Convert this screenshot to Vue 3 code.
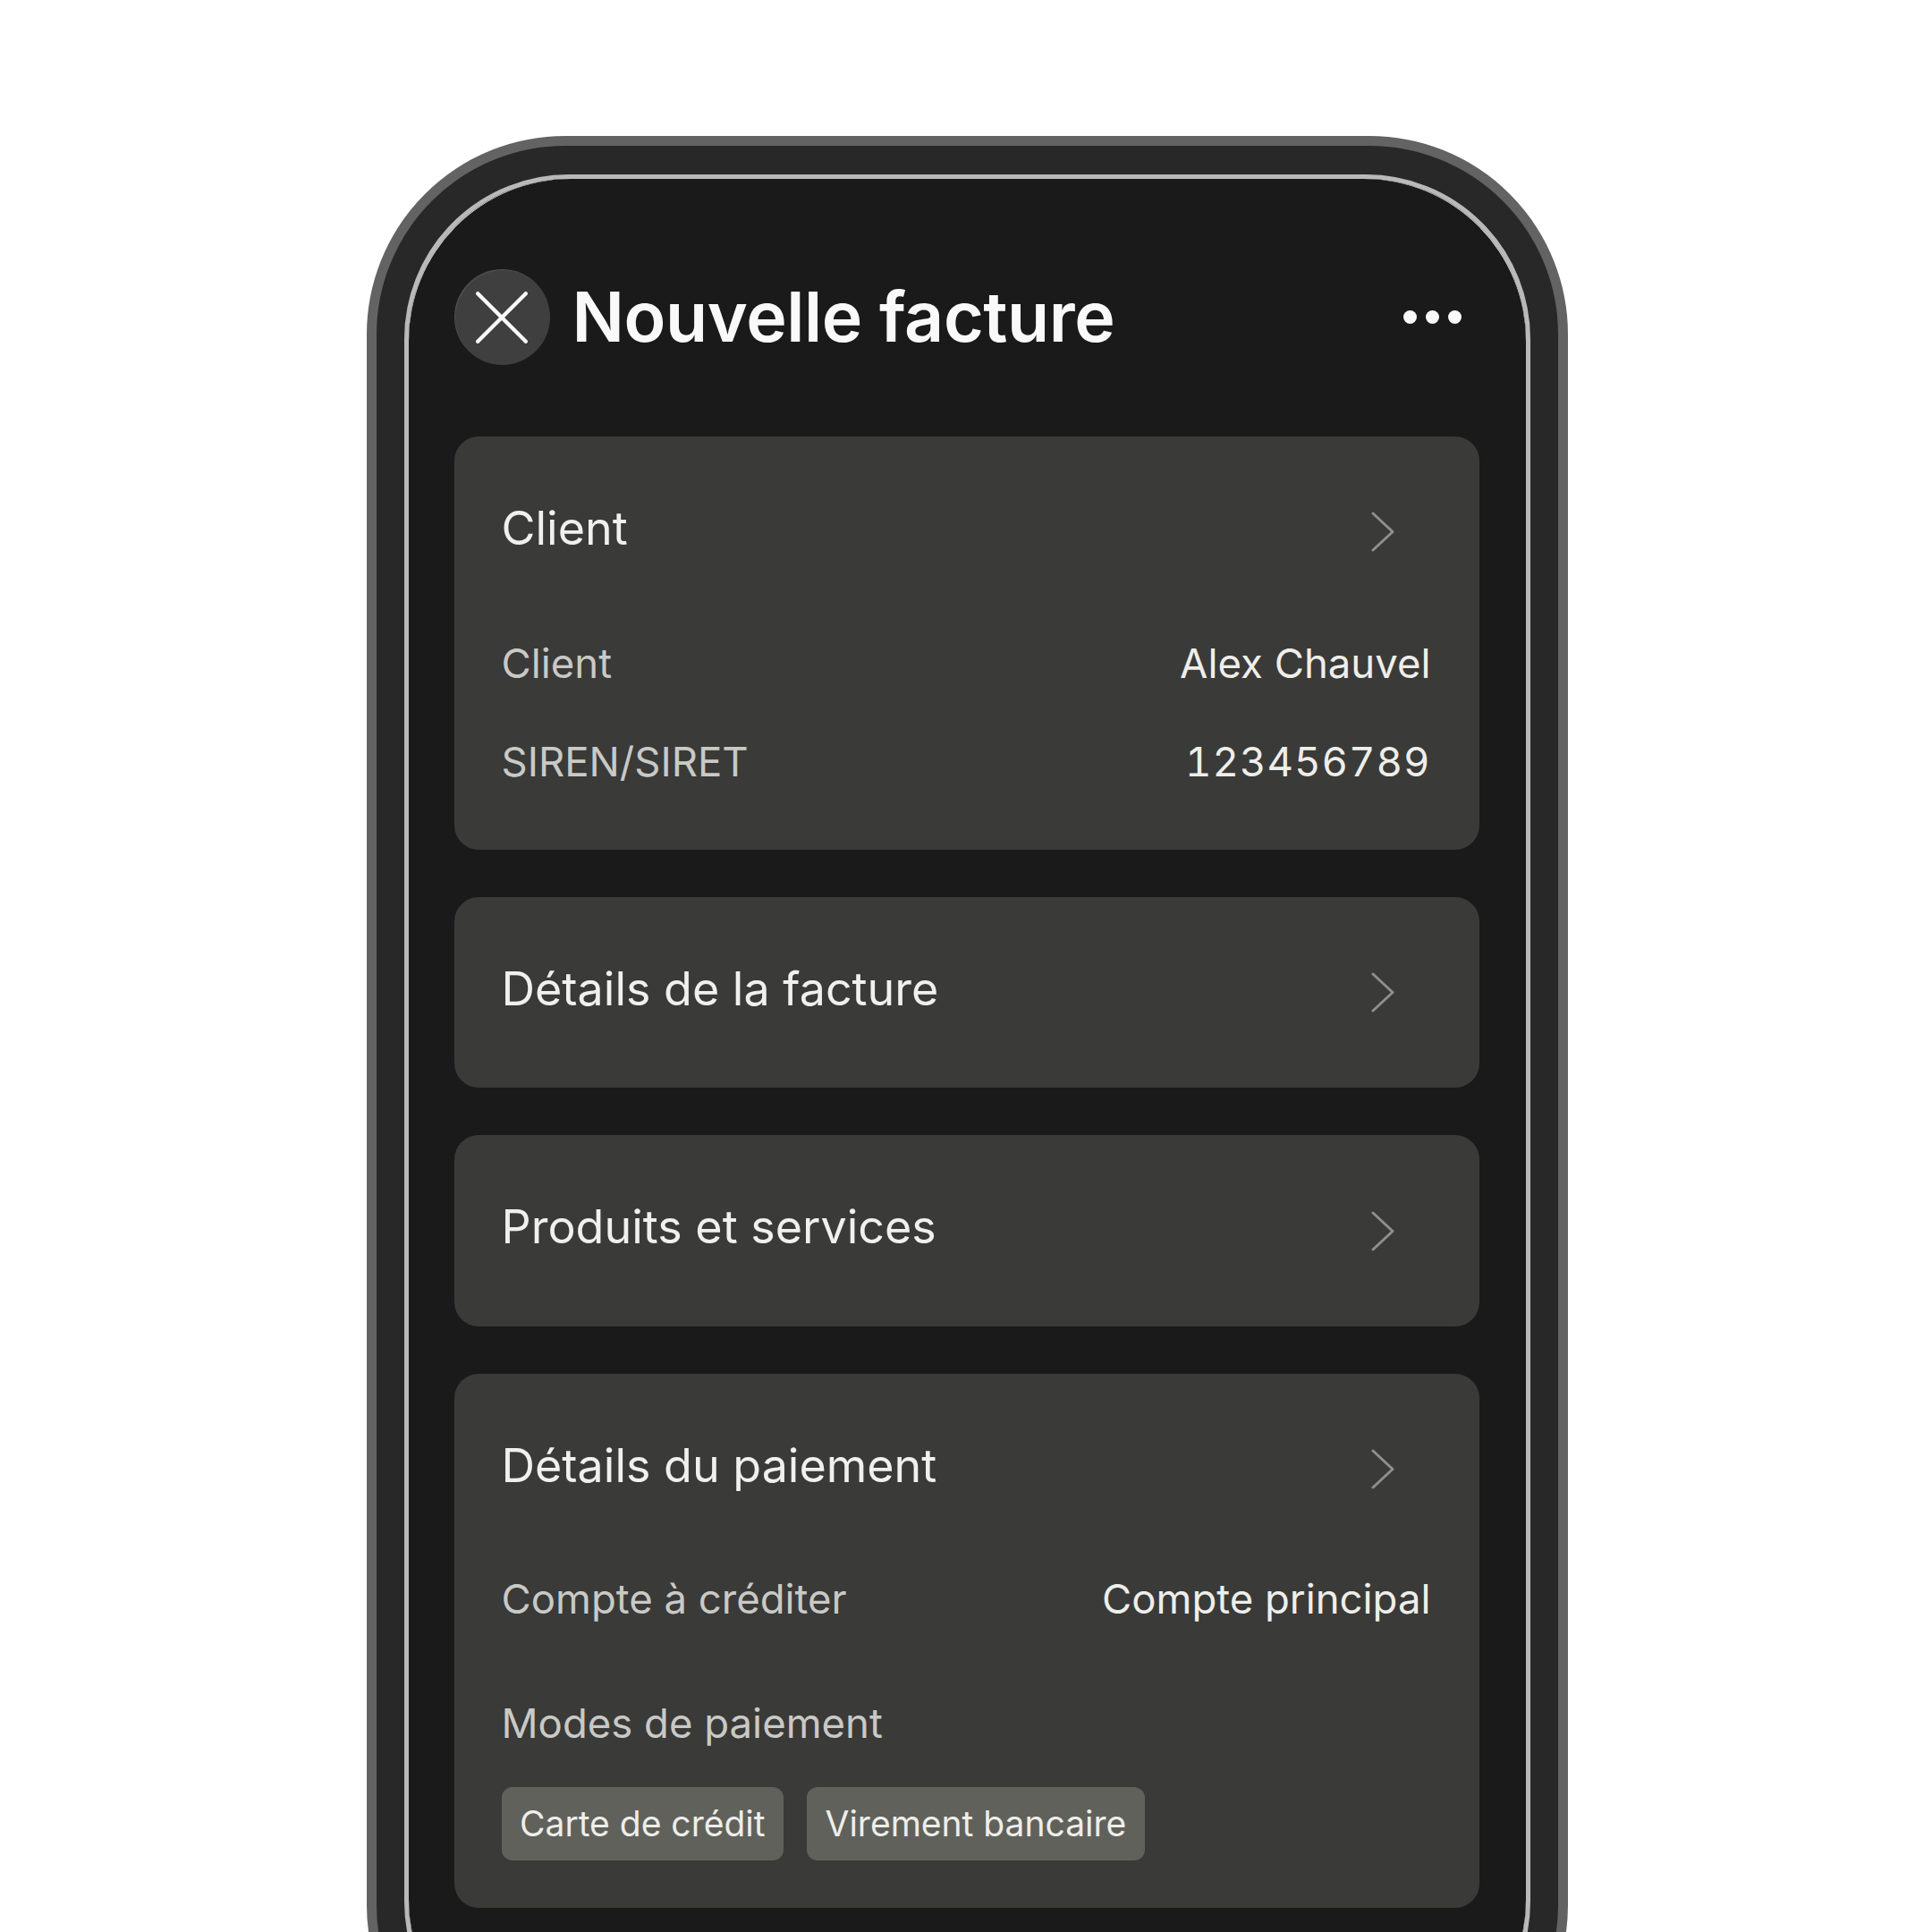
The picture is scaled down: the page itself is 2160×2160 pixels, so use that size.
<script setup>
const clientRows = [
  { label: 'Client', value: 'Alex Chauvel', num: false },
  { label: 'SIREN/SIRET', value: '123456789', num: true },
]
</script>

<template>
  <div class="page">
    <div class="phone">
      <div class="bezel">
        <div class="screen">
          <header class="top">
            <button class="close" aria-label="Fermer">
              <svg width="58" height="58" viewBox="0 0 58 58" fill="none">
                <path d="M2.2 2.2 L55.8 55.8 M55.8 2.2 L2.2 55.8" stroke="#f9f9f9" stroke-width="4.3" stroke-linecap="round" />
              </svg>
            </button>
            <h1 class="title">Nouvelle facture</h1>
            <div class="dots"><i></i><i></i><i></i></div>
          </header>

          <section class="card">
            <div class="head">
              <h2>Client</h2>
              <svg class="chev" width="26" height="45" viewBox="0 0 26 45" fill="none">
                <path d="M2 2 L24 22.5 L2 43" stroke="#8f8f8c" stroke-width="3" stroke-linecap="round" stroke-linejoin="round" />
              </svg>
            </div>
            <div class="body">
              <div v-for="r in clientRows" :key="r.label" class="row">
                <span class="lab">{{ r.label }}</span>
                <span class="val" :class="{ num: r.num }">{{ r.value }}</span>
              </div>
            </div>
          </section>

          <section class="card plain">
            <div class="head">
              <h2>Détails de la facture</h2>
              <svg class="chev" width="26" height="45" viewBox="0 0 26 45" fill="none">
                <path d="M2 2 L24 22.5 L2 43" stroke="#8f8f8c" stroke-width="3" stroke-linecap="round" stroke-linejoin="round" />
              </svg>
            </div>
          </section>

          <section class="card plain">
            <div class="head">
              <h2>Produits et services</h2>
              <svg class="chev" width="26" height="45" viewBox="0 0 26 45" fill="none">
                <path d="M2 2 L24 22.5 L2 43" stroke="#8f8f8c" stroke-width="3" stroke-linecap="round" stroke-linejoin="round" />
              </svg>
            </div>
          </section>

          <section class="card">
            <div class="head">
              <h2>Détails du paiement</h2>
              <svg class="chev" width="26" height="45" viewBox="0 0 26 45" fill="none">
                <path d="M2 2 L24 22.5 L2 43" stroke="#8f8f8c" stroke-width="3" stroke-linecap="round" stroke-linejoin="round" />
              </svg>
            </div>
            <div class="body pay">
              <div class="row">
                <span class="lab">Compte à créditer</span>
                <span class="val">Compte principal</span>
              </div>
              <div class="row modes">
                <span class="lab">Modes de paiement</span>
              </div>
              <div class="chips">
                <span class="chip">Carte de crédit</span>
                <span class="chip">Virement bancaire</span>
              </div>
            </div>
          </section>
        </div>
      </div>
    </div>
  </div>
</template>

<style>
html, body { margin: 0; background: #fff; }
</style>

<style scoped>
.page {
  width: 2160px;
  height: 2160px;
  overflow: hidden;
  background: #fff;
  box-sizing: border-box;
  padding: 152px 0 0 410px;
  font-family: Inter, "Liberation Sans", sans-serif;
}
.phone {
  width: 1343px;
  height: 2200px;
  box-sizing: border-box;
  border: 11px solid #636363;
  border-radius: 222px;
  background: #282828;
  padding: 31.5px 31px;
}
.bezel {
  height: 100%;
  box-sizing: border-box;
  border: 5.5px solid #b9b9b9;
  border-radius: 184px;
  background: #fff;
  background-clip: padding-box;
}
.screen {
  height: 100%;
  box-sizing: border-box;
  border-radius: 181px;
  background: #1a1a1a;
  padding: 101.5px 52.5px 0 50.5px;
  color: #f0f0ec;
}
.top {
  display: flex;
  align-items: center;
  height: 107px;
  margin-bottom: 79.5px;
}
.close {
  width: 107px;
  height: 107px;
  flex: none;
  border: 0;
  padding: 0;
  border-radius: 50%;
  background: #3f3f3f;
  box-shadow: inset 1px 1px 1px rgba(255, 255, 255, 0.1);
  display: flex;
  align-items: center;
  justify-content: center;
  margin-right: 25px;
}
.title {
  flex: 1;
  margin: 0;
  font-size: 77px;
  line-height: 107px;
  font-weight: 600;
  color: #f9f9f9;
  letter-spacing: -0.4px;
}
.dots {
  display: flex;
  gap: 10px;
  margin-right: 20px;
}
.dots i {
  width: 15px;
  height: 15px;
  border-radius: 50%;
  background: #f9f9f9;
}
.card {
  background: #3a3a38;
  border-radius: 27px;
  padding-bottom: 43px;
  margin-bottom: 53px;
}
.card.plain { padding-bottom: 16.5px; }
.head {
  height: 197px;
  box-sizing: border-box;
  display: flex;
  align-items: flex-start;
  justify-content: space-between;
  padding: 0 95px 0 53px;
}
.head h2 {
  margin: 73px 0 0;
  font-size: 52px;
  line-height: 60px;
  font-weight: 400;
  color: #f0f0ec;
}
.chev { margin-top: 84.5px; }
.body { padding: 0 54px 0 53px; margin-top: 2px; }
.row {
  display: flex;
  justify-content: space-between;
  font-size: 45.5px;
  line-height: 110px;
}
.lab { color: #c9c9c6; }
.val { color: #eeeeea; }
.num { font-variant-numeric: tabular-nums; letter-spacing: 1px; }
.pay { padding-bottom: 10px; margin-top: 0; }
.modes { margin-top: 29px; }
.chips {
  display: flex;
  gap: 26px;
  margin-top: 16px;
}
.chip {
  height: 82px;
  line-height: 82px;
  padding: 0 20.5px;
  border-radius: 12px;
  background: #61615c;
  color: #eeeeea;
  font-size: 39px;
}
</style>
